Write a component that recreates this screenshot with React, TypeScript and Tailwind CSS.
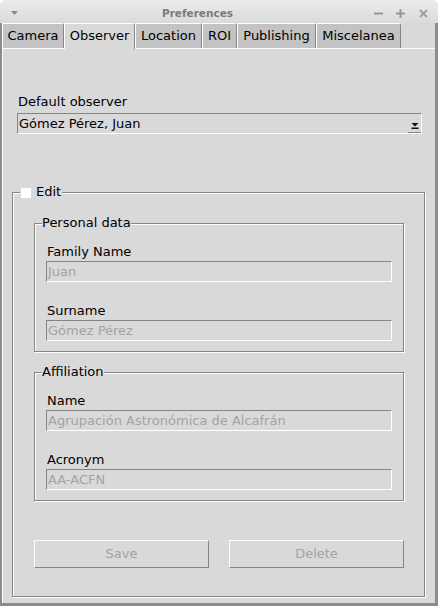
import React from "react";

function Sunken({ value, className = "" }: { value: string; className?: string }) {
  return (
    <div
      className={
        "h-[21px] border border-t-[#858585] border-l-[#858585] border-b-white border-r-white pl-px leading-[19px] text-[#a3a3a3] " +
        className
      }
    >
      {value}
    </div>
  );
}

function Field({ label, value }: { label: string; value: string }) {
  return (
    <div className="mx-[11px]">
      <div className="pl-px leading-[15px] text-black">{label}</div>
      <Sunken value={value} className="mt-[2px]" />
    </div>
  );
}

function Group({
  legend,
  className = "",
  children,
}: {
  legend: React.ReactNode;
  className?: string;
  children: React.ReactNode;
}) {
  return (
    <fieldset
      className={
        "border border-[#858585] shadow-[1px_1px_0_#fff,inset_1px_1px_0_#fff] " + className
      }
    >
      <legend className="ml-[7px] bg-[#d9d9d9]">
        <span className="flex h-[15px] items-center pb-[2px] leading-[15px] text-black">{legend}</span>
      </legend>
      {children}
    </fieldset>
  );
}

const tabs = [
  { name: "Camera", w: "w-[62px]" },
  { name: "Observer", w: "w-[71px]", active: true },
  { name: "Location", w: "w-[67px]" },
  { name: "ROI", w: "w-[35px]" },
  { name: "Publishing", w: "w-[79px]" },
  { name: "Miscelanea", w: "w-[85px]" },
];

export default function App() {
  return (
    <div className="h-[606px] w-[438px] bg-white font-['DejaVu_Sans',sans-serif] text-[13px]">
      <div className="flex h-full flex-col overflow-hidden rounded-t-[5px]">
        {/* title bar */}
        <div className="flex h-[23px] shrink-0 items-center bg-gradient-to-b from-[#ececec] to-[#dadada] pt-[3px]">
          <div className="w-[30px] pl-[11px]">
            <svg width="8" height="5" viewBox="0 0 8 5">
              <polygon points="0,0 7,0 3.5,4" fill="#8a8a8a" />
            </svg>
          </div>
          <div className="flex-1 text-center text-[10.5px] font-bold leading-[13px] text-[#7a7a7a]">
            Preferences
          </div>
          <div className="flex w-[73px] items-center pl-[9px]">
            <svg width="9" height="9" viewBox="0 0 9 9">
              <line x1="0" y1="4.5" x2="9" y2="4.5" stroke="#959595" strokeWidth="2" />
            </svg>
            <svg width="9" height="9" viewBox="0 0 9 9" className="ml-[13px]">
              <line x1="0" y1="4.5" x2="9" y2="4.5" stroke="#959595" strokeWidth="2" />
              <line x1="4.5" y1="0" x2="4.5" y2="9" stroke="#959595" strokeWidth="2" />
            </svg>
            <svg width="9" height="9" viewBox="0 0 9 9" className="ml-[14px]">
              <line x1="1" y1="1" x2="8" y2="8" stroke="#a0a0a0" strokeWidth="2" />
              <line x1="8" y1="1" x2="1" y2="8" stroke="#a0a0a0" strokeWidth="2" />
            </svg>
          </div>
        </div>

        <div className="flex flex-1 flex-col border-b-[3px] border-l-2 border-r-[3px] border-[#8c8c8c] bg-[#d9d9d9]">
          {/* tabs */}
          <div className="flex h-[25px] shrink-0 items-end">
            {tabs.map((t) => (
              <div
                key={t.name}
                className={
                  "flex items-center justify-center rounded-tr-[3px] border-l border-t border-r border-l-white border-t-white border-r-[#858585] text-black " +
                  t.w +
                  (t.active
                    ? " relative z-10 -mb-px h-[26px] bg-[#d9d9d9] pb-px"
                    : " h-[25px] bg-[#c3c3c3]")
                }
              >
                {t.name}
              </div>
            ))}
          </div>

          {/* panel */}
          <div className="flex flex-1 flex-col border-l border-t border-white">
            <div className="ml-[15px] mt-[45px] leading-[15px] text-black">Default observer</div>
            <div className="ml-[14px] mr-[13px] mt-[4px] flex h-[21px] border border-t-[#858585] border-l-[#858585] border-b-white border-r-white">
              <div className="flex-1 pl-px leading-[19px] text-black">Gómez Pérez, Juan</div>
              <div className="flex w-[13px] items-end justify-center border-b border-[#858585] pb-[3px]">
                <svg width="8" height="6" viewBox="0 0 8 6">
                  <polygon points="0.5,0 7.5,0 4,3.5" fill="#111" />
                  <rect x="0.5" y="4.5" width="7" height="1.5" fill="#111" />
                </svg>
              </div>
            </div>

            <Group
              className="ml-[9px] mr-[10px] mt-[51px]"
              legend={
                <>
                  <span className="ml-[1px] mt-[2px] h-[10px] w-[10px] bg-white" />
                  <span className="ml-[5px] pr-px">Edit</span>
                </>
              }
            >
              <Group className="ml-[21px] mr-[20px] mt-[16px]" legend="Personal data">
                <div className="pb-[10px] pt-[13px]">
                  <Field label="Family Name" value="Juan" />
                  <div className="mt-[21px]">
                    <Field label="Surname" value="Gómez Pérez" />
                  </div>
                </div>
              </Group>

              <Group className="ml-[21px] mr-[20px] mt-[13px]" legend="Affiliation">
                <div className="pb-[10px] pt-[13px]">
                  <Field label="Name" value="Agrupación Astronómica de Alcafrán" />
                  <div className="mt-[21px]">
                    <Field label="Acronym" value="AA-ACFN" />
                  </div>
                </div>
              </Group>

              <div className="ml-[21px] mr-[20px] mt-[39px] flex gap-[20px] pb-[28px]">
                {["Save", "Delete"].map((b) => (
                  <div
                    key={b}
                    className="flex h-[28px] w-[175px] items-center justify-center border border-t-white border-l-white border-b-[#858585] border-r-[#858585] text-[#a3a3a3]"
                  >
                    {b}
                  </div>
                ))}
              </div>
            </Group>
          </div>
        </div>
      </div>
    </div>
  );
}
